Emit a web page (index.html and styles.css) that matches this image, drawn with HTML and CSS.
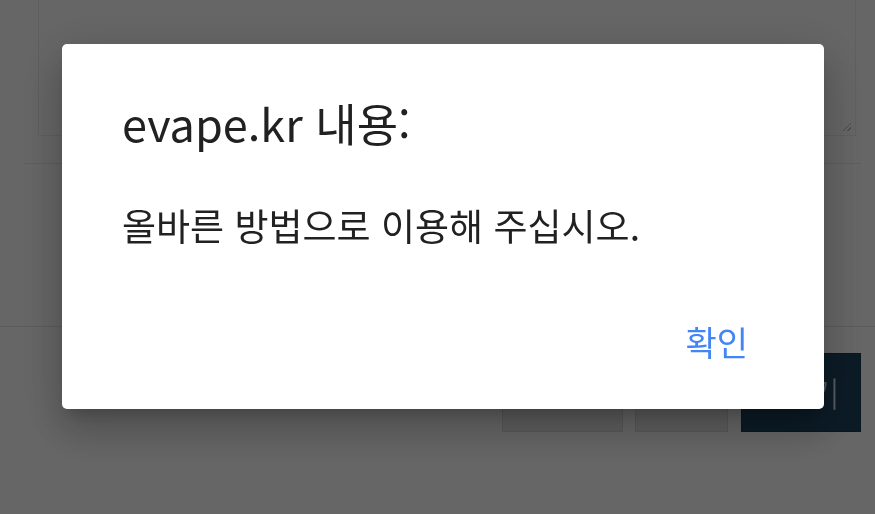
FILE: index.html
```html
<!DOCTYPE html>
<html lang="ko">
<head>
  <meta charset="UTF-8" />
  <meta name="viewport" content="width=device-width, initial-scale=1" />
  <title>evape.kr</title>
  <link rel="stylesheet" href="styles.css">
</head>
<body>
  <!-- Page behind the alert -->
  <div class="page">
    <div class="memo-wrap">
      <div class="memo"><span class="grip"></span></div>
    </div>
    <hr class="rule rule-top" />
    <div class="spacer"></div>
    <hr class="rule rule-bottom" />
    <div class="actions">
      <button class="btn btn-light btn-wide"></button>
      <button class="btn btn-light"></button>
      <button class="btn btn-dark">쓰기</button>
    </div>
  </div>

  <!-- Native-style alert -->
  <div class="overlay">
    <div class="dialog" role="alertdialog" aria-labelledby="dlgTitle">
      <h2 class="dialog-title" id="dlgTitle">evape.kr 내용:</h2>
      <p class="dialog-msg">올바른 방법으로 이용해 주십시오.</p>
      <div class="dialog-actions">
        <button class="dialog-ok">확인</button>
      </div>
    </div>
  </div>
</body>
</html>
```

FILE: styles.css
```css
:root {
  --ink: #212121;
  --accent: #4285f4;
  --line: #e6e8e7;
  --scrim: rgba(0, 0, 0, 0.6);
}
html, body {
  height: 100%;
}
body {
  margin: 0;
  background: #fff;
  font-family: "Noto Sans CJK KR", "Noto Sans", sans-serif;
  color: var(--ink);
  overflow: hidden;
}

/* background page */
.page {
  display: flex;
  flex-direction: column;
}
.memo-wrap {
  padding: 0 19px 0 38px;
}
.memo {
  height: 136px;
  border: 1px solid #eceeed;
  border-top: none;
  box-sizing: border-box;
  display: flex;
  align-items: flex-end;
  justify-content: flex-end;
}
.grip {
  width: 8px;
  height: 8px;
  margin: 0 4px 4px 0;
  background: linear-gradient(135deg, transparent 45%, #bbb 45%, #bbb 55%, transparent 55%, transparent 75%, #bbb 75%, #bbb 85%, transparent 85%);
}
.rule {
  margin: 0;
  border: none;
  height: 1px;
  background: var(--line);
}
.rule-top {
  margin: 27px 14px 0 24px;
}
.spacer {
  height: 162px;
}
.rule-bottom {
  background: #dfe8e4;
}
.actions {
  display: flex;
  justify-content: flex-end;
  gap: 13px;
  padding: 26px 14px 0 0;
}
.btn {
  height: 79px;
  width: 93px;
  border: 1px solid #dcdcdc;
  background: #ececec;
  font-family: inherit;
  font-size: 34px;
  color: #fff;
  padding: 0;
}
.btn-wide {
  width: 121px;
  margin-right: -1px;
}
.btn-dark {
  width: 120px;
  background: #1d4560;
  border-color: #173a52;
  text-align: right;
  padding-right: 20px;
  color: #dfe6ea;
  font-weight: 300;
}

/* alert */
.overlay {
  position: fixed;
  inset: 0;
  background: var(--scrim);
  padding: 44px 0 0 62px;
}
.dialog {
  width: 762px;
  height: 365px;
  box-sizing: border-box;
  background: #fff;
  border-radius: 5px;
  padding: 47px 60px 0 60px;
  display: flex;
  flex-direction: column;
  box-shadow: 0 24px 38px 3px rgba(0,0,0,0.14), 0 9px 46px 8px rgba(0,0,0,0.12), 0 11px 15px -7px rgba(0,0,0,0.2);
}
.dialog-title {
  margin: 0;
  font-size: 45px;
  font-weight: 400;
  line-height: 64px;
}
.dialog-msg {
  margin: 44px 0 0;
  font-size: 37px;
  line-height: 52px;
}
.dialog-actions {
  display: flex;
  justify-content: flex-end;
  margin-top: 65px;
}
.dialog-ok {
  border: none;
  background: none;
  padding: 0 16px 0 0;
  font-family: inherit;
  font-size: 34px;
  line-height: 52px;
  color: var(--accent);
}
```
